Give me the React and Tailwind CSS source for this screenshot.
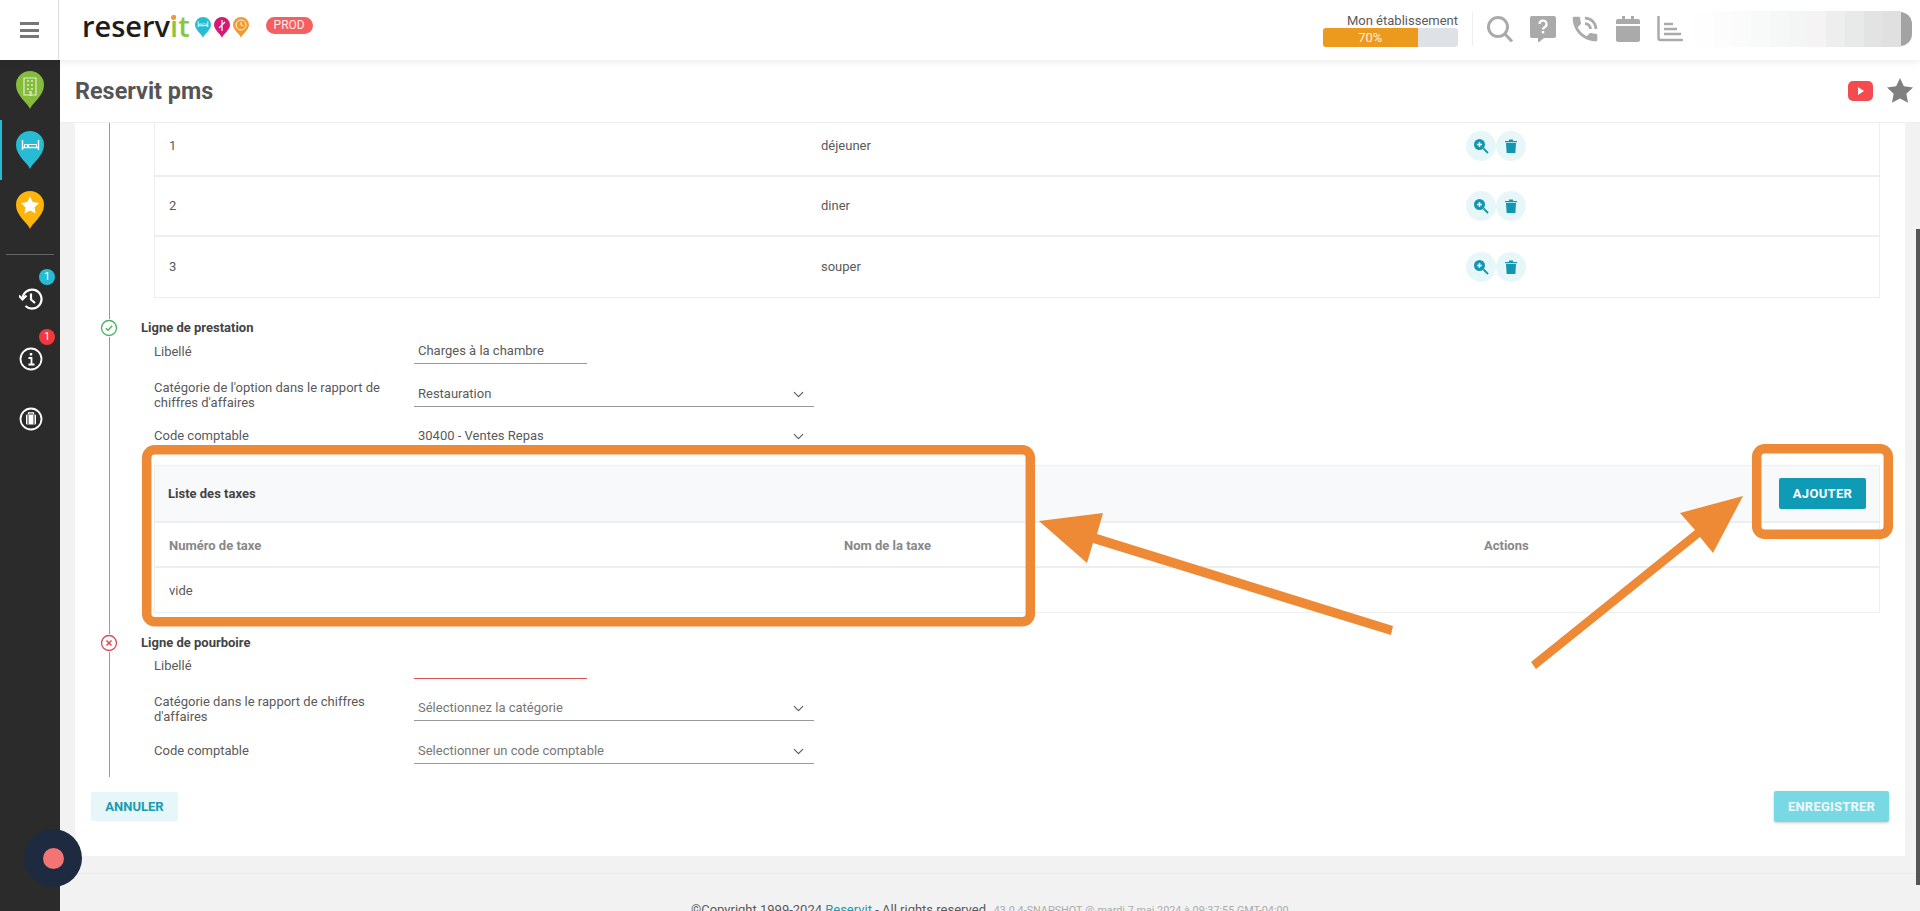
import React from 'react'
import { ChevronDown } from 'lucide-react'

const Pin = ({ color, children }) => (
  <svg width="28" height="38" viewBox="0 0 28 38">
    <path d="M14 38 C12 32 0 25 0 14 A14 14 0 0 1 28 14 C28 25 16 32 14 38 Z" fill={color} />
    {children}
  </svg>
)

const MiniPin = ({ color, children }) => (
  <svg width="16" height="21" viewBox="0 0 16 21">
    <path d="M8 21 C7 17 0 13 0 8 A8 8 0 0 1 16 8 C16 13 9 17 8 21 Z" fill={color} />
    {children}
  </svg>
)

const Bed = ({ scale = 1, x = 0, y = 0 }) => (
  <g transform={`translate(${x} ${y}) scale(${scale})`} fill="none" stroke="#fff" strokeWidth="1.4">
    <path d="M1 2v10M17 2v10M1 9.5h16" />
    <path d="M3 9V6.500h3V9M7 9V6.500h8V9" strokeWidth="1" />
  </g>
)

const GrayIcon = ({ children, vb = '0 0 26 26' }) => (
  <svg width="26" height="26" viewBox={vb}>{children}</svg>
)

const ActionButtons = () => (
  <div className="flex">
    <div className="w-[30px] h-[30px] rounded-full bg-[#e6f6f9] flex items-center justify-center">
      <svg width="16" height="16" viewBox="0 0 16 16">
        <circle cx="6.500" cy="6.500" r="5.500" fill="#1397b0" />
        <path d="M10.500 10.500 15 15" stroke="#1397b0" strokeWidth="1.800" />
        <path d="M6.500 4v5M4 6.500h5" stroke="#e6f6f9" strokeWidth="1.500" />
      </svg>
    </div>
    <div className="w-[30px] h-[30px] rounded-full bg-[#e6f6f9] flex items-center justify-center">
      <svg width="12" height="14" viewBox="0 0 12 14">
        <path d="M0 2h12v1.200H0zM4 .5h4V2H4z" fill="#1397b0" />
        <path d="M1 4h10l-.6 10H1.600z" fill="#1397b0" />
      </svg>
    </div>
  </div>
)

const OptionRow = ({ num, name, last }) => (
  <div className={`h-[60px] flex items-center text-[13px] ${last ? '' : 'border-b-2 border-[#eeeeee]'}`}>
    <div className="w-[666px] pl-[14px]">{num}</div>
    <div className="w-[645px]">{name}</div>
    <ActionButtons />
  </div>
)

// h = row height, labelClass = nudge of the label above the field's bottom line
const FormRow = ({ label, value, placeholder, select, error, h, labelClass }) => (
  <div className={`flex items-end ${h}`}>
    <div className={`w-[260px] leading-[15px] pr-2 ${labelClass}`}>{label}</div>
    {select ? (
      <div className="w-[400px] h-[28px] border-b border-[#999] flex items-center justify-between pl-1 pr-[7px] pt-[3px]">
        <span className={placeholder ? 'text-[#777]' : ''}>{value || placeholder}</span>
        <ChevronDown size={17} strokeWidth={1.5} className="text-[#555]" />
      </div>
    ) : (
      <div className={`w-[173px] h-[26px] border-b pl-1 flex items-center ${error ? 'border-[#d9534f]' : 'border-[#999]'}`}>
        {value}
      </div>
    )}
  </div>
)

const StatusIcon = ({ ok }) => (
  <svg width="18" height="18" viewBox="0 0 18 18" className="bg-white rounded-full shrink-0">
    <circle cx="9" cy="9" r="7.500" fill="none" stroke={ok ? '#4caf63' : '#dc4a55'} strokeWidth="1.300" />
    {ok ? (
      <path d="M5.800 9.200 8 11.200 12.200 6.800" fill="none" stroke="#4caf63" strokeWidth="1.400" />
    ) : (
      <path d="M6.500 6.500l5 5M11.500 6.500l-5 5" fill="none" stroke="#dc4a55" strokeWidth="1.500" />
    )}
  </svg>
)

const App = () => {
  return (
    <div className="relative w-[1920px] h-[911px] overflow-hidden bg-[#f2f2f2] font-['Roboto',sans-serif] text-[13px] text-[#5a5a5a]">
      {/* top bar */}
      <header className="relative z-10 h-[60px] bg-white flex items-center shadow-[0_2px_8px_rgba(0,0,0,0.08)]">
        <div className="w-[59px] h-full border-r border-[#ddd] flex flex-col items-center justify-center gap-[3.500px]">
          <span className="w-[19px] h-[3px] bg-[#777]" />
          <span className="w-[19px] h-[3px] bg-[#777]" />
          <span className="w-[19px] h-[3px] bg-[#777]" />
        </div>
        <div className="ml-[23px] flex items-center h-full pb-[10px]">
          <span className="font-['Open_Sans',sans-serif] font-semibold text-[29px] leading-none text-[#1d1d1b]">
            reserv
            <span className="text-[#8cc63f]">
              <span className="relative">
                i
                <span className="absolute left-[1px] top-[9px] w-[5px] h-[5px] rounded-full bg-[#ef9a33]" />
              </span>
              t
            </span>
          </span>
          <div className="flex gap-[3px] ml-[5px] mt-[5px]">
            <MiniPin color="#27bcd3"><Bed scale={0.6} x={2.600} y={3} /></MiniPin>
            <MiniPin color="#d41a73">
              <path d="M8 3v11M8 8l3-3M8 8 5 11" stroke="#fff" strokeWidth="1.200" fill="none" />
            </MiniPin>
            <MiniPin color="#ef9a33">
              <circle cx="8" cy="8" r="5" fill="none" stroke="#fff" strokeWidth="0.900" />
              <path d="M8 5v3l2.500 1" fill="none" stroke="#fff" strokeWidth="0.900" />
            </MiniPin>
          </div>
          <span className="ml-[17px] w-[47px] h-[17px] rounded-full bg-[#f55f5f] text-[#ffe9e9] text-[12px] flex items-center justify-center">PROD</span>
        </div>

        <div className="ml-auto flex items-center h-full">
          <div className="w-[135px] text-right">
            <div className="text-[13px] leading-[15px]">Mon établissement</div>
            <div className="h-[19px] rounded-[3px] bg-[#dee2e6] overflow-hidden">
              <div className="w-[70%] h-full bg-[#ec9a1e] text-[#fff3d9] text-[13px] leading-[19px] text-center">70%</div>
            </div>
          </div>
          <div className="w-px h-[34px] bg-[#eee] ml-[14px] mb-[2px]" />
          <div className="flex items-center gap-[16.5px] ml-[14px] mb-[2px]">
            <GrayIcon>
              <circle cx="11" cy="11" r="9.500" fill="none" stroke="#aaa" strokeWidth="3" />
              <path d="M17.500 17.500 25 25.500" stroke="#aaa" strokeWidth="3" />
            </GrayIcon>
            <GrayIcon>
              <path d="M2 0h22a2 2 0 0 1 2 2v18a2 2 0 0 1-2 2H14l-6 5v-5H2a2 2 0 0 1-2-2V2a2 2 0 0 1 2-2Z" fill="#aaa" />
              <path d="M9.500 8a3.500 3.500 0 1 1 5 3.200c-1 .6-1.500 1.200-1.500 2.300" fill="none" stroke="#fff" strokeWidth="2.200" />
              <rect x="11.800" y="15" width="2.400" height="2.400" fill="#fff" />
            </GrayIcon>
            <GrayIcon vb="2.500 2.500 19 19">
              <path d="M20 15.500c-1.250 0-2.450-.2-3.570-.57-.35-.11-.74-.03-1.020.24l-2.200 2.200c-2.830-1.440-5.150-3.750-6.590-6.590l2.200-2.210c.28-.26.36-.65.25-1C8.700 6.450 8.500 5.250 8.500 4c0-.55-.45-1-1-1H4c-.55 0-1 .45-1 1 0 9.390 7.610 17 17 17 .55 0 1-.45 1-1v-3.500c0-.55-.45-1-1-1zM19 12h2c0-4.970-4.030-9-9-9v2c3.870 0 7 3.130 7 7zm-4 0h2c0-2.760-2.240-5-5-5v2c1.660 0 3 1.340 3 3z" fill="#aaa" />
            </GrayIcon>
            <GrayIcon vb="-1 0 26 26">
              <path d="M2 3h4V0h3v3h6V0h3v3h4a2 2 0 0 1 2 2v3H0V5a2 2 0 0 1 2-2Z" fill="#aaa" />
              <path d="M0 10h24v14a2 2 0 0 1-2 2H2a2 2 0 0 1-2-2Z" fill="#aaa" />
            </GrayIcon>
            <GrayIcon>
              <path d="M1.500 1v21a2 2 0 0 0 2 2H25" fill="none" stroke="#aaa" strokeWidth="2.500" strokeLinecap="round" />
              <path d="M7 8h9M7 13h13M7 18h17" stroke="#aaa" strokeWidth="2.500" />
            </GrayIcon>
          </div>
          {/* pixelated user name */}
          <div className="relative w-[206px] h-[36px] ml-[12px] mr-[19px] mb-[2px]">
            <div className="absolute -right-[11px] top-[1px] w-[24px] h-[34px] rounded-full bg-[#a3a3a3]" />
            <div className="relative h-full flex">
              <span className="flex-1 bg-[#fefefe]" />
              <span className="flex-1 bg-[#fcfcfc]" />
              <span className="flex-1 bg-[#fbfbfb]" />
              <span className="flex-1 bg-[#f8f9f9]" />
              <span className="flex-1 bg-[#f6f7f7]" />
              <span className="flex-1 bg-[#f4f6f6]" />
              <span className="flex-1 bg-[#f5f3f3]" />
              <span className="flex-1 bg-[#eeeeee]" />
              <span className="flex-1 bg-[#e8eaea]" />
              <span className="flex-1 bg-[#e3e3e3]" />
              <span className="flex-1 bg-[#dfe0df]" />
            </div>
          </div>
        </div>
      </header>

      <div className="flex h-[851px]">
        {/* left rail */}
        <aside className="w-[60px] shrink-0 bg-[#2b2b2b] flex flex-col items-center pt-[11px]">
          <Pin color="#86bc3c">
            <path d="M8 7h12v17H8z" fill="none" stroke="#dceec5" strokeWidth="1.200" />
            <path d="M11 10h2M15 10h2M11 14h2M15 14h2M11 18h2M15 18h2M13 21h2v3h-2" stroke="#dceec5" strokeWidth="1.400" fill="none" />
          </Pin>
          <div className="relative w-full h-[60px] mt-[11px] flex items-start justify-center pt-[11px] border-l-2 border-[#27bcd3] pr-[2px]">
            <Pin color="#27bcd3"><Bed x={5.500} y={7} /></Pin>
          </div>
          <div className="mt-[11px]">
            <Pin color="#fdb50b">
              <path d="M14 5.500l2.800 5.600 6.200.9-4.500 4.400 1.100 6.100-5.600-2.900-5.600 2.900 1.100-6.100L5 12l6.200-.9Z" fill="#fff" />
            </Pin>
          </div>
          <div className="w-[48px] h-px bg-[#666] mt-[25px]" />
          <div className="relative mt-[32px] ml-[2px] w-[24px] h-[24px]">
            <span className="absolute -top-[18px] left-[20px] w-[16px] h-[16px] rounded-full bg-[#27bcd3] text-white text-[11px] flex items-center justify-center">1</span>
            <svg width="24" height="24" viewBox="0 0 24 24" fill="none" stroke="#fff" strokeWidth="2.200">
              <path d="M3.500 12a9.500 9.500 0 1 1 3 7" />
              <path d="M0 8.500l3.500 4 4-4" />
              <path d="M12 6.500v6l4 3.500" />
            </svg>
          </div>
          <div className="relative mt-[36px] ml-[2px] w-[24px] h-[24px]">
            <span className="absolute -top-[18px] left-[20px] w-[16px] h-[16px] rounded-full bg-[#f03a3e] text-white text-[11px] flex items-center justify-center">1</span>
            <svg width="24" height="24" viewBox="0 0 24 24" fill="none" stroke="#fff">
              <circle cx="12" cy="12" r="10.500" strokeWidth="1.800" />
              <path d="M12 6v2.500" strokeWidth="2.400" />
              <path d="M9.500 11H12.500V17M9.500 17.500h6" strokeWidth="1.800" />
            </svg>
          </div>
          <div className="mt-[36px] ml-[2px] w-[24px] h-[24px]">
            <svg width="24" height="24" viewBox="0 0 24 24" fill="none" stroke="#fff">
              <circle cx="12" cy="12" r="10.500" strokeWidth="1.800" />
              <rect x="7" y="7.500" width="10" height="10" rx="1" fill="#fff" stroke="none" />
              <path d="M9.500 7.500V5.800h5v1.700" strokeWidth="1.200" />
              <path d="M9 7.500v10M15 7.500v10" stroke="#2b2b2b" strokeWidth="1" />
            </svg>
          </div>
        </aside>

        <main className="flex-1 min-w-0 flex flex-col">
          {/* title bar */}
          <div className="h-[63px] shrink-0 bg-white border-b border-[#eee] flex items-center pl-[15px] pr-[7px]">
            <h1 className="text-[23.4px] font-bold text-[#555] leading-none pt-[2px]">Reservit pms</h1>
            <div className="ml-auto flex items-center gap-[14px]">
              <div className="w-[25px] h-[20px] rounded-[5px] bg-[#f44b4f] flex items-center justify-center">
                <span className="w-0 h-0 border-y-[4px] border-y-transparent border-l-[6px] border-l-white" />
              </div>
              <svg width="26" height="25" viewBox="0 0 24 23" className="mb-[2px]">
                <path d="M12 0l3.600 7.600 8.400 1.100-6.100 5.800 1.500 8.300L12 18.800l-7.400 4 1.500-8.300L0 8.700l8.400-1.100Z" fill="#808080" />
              </svg>
            </div>
          </div>

          {/* scrolling content */}
          <div className="relative flex-1 min-h-0 overflow-hidden">
            <div className="absolute right-0 top-[106px] w-[4px] h-[656px] bg-[#555]" />
            <div className="ml-[15px] mr-[15px] h-[733px] bg-white pl-[16px] pr-[25px]">
              <div className="flex">
                <div className="w-px h-[654px] bg-[#999] ml-[18px] shrink-0" />
                <div className="flex-1 min-w-0 h-[654px]">
                  {/* rows of the previous section, scrolled partly out of view */}
                  <div className="ml-[44px] -mt-[6px] border border-t-0 border-[#eeeeee]">
                    <OptionRow num="1" name="déjeuner" />
                    <OptionRow num="2" name="diner" />
                    <OptionRow num="3" name="souper" last />
                  </div>

                  <div className="flex items-center h-[18px] mt-[21px] -ml-[10px]">
                    <StatusIcon ok />
                    <span className="ml-[23px] font-bold text-[#444]">Ligne de prestation</span>
                  </div>
                  <div className="ml-[44px] mt-[1px]">
                    <FormRow label="Libellé" value="Charges à la chambre" h="h-[26px]" labelClass="mb-[5px]" />
                    <FormRow label="Catégorie de l'option dans le rapport de chiffres d'affaires" value="Restauration" select h="h-[43px]" labelClass="-mb-[2.5px]" />
                    <FormRow label="Code comptable" value="30400 - Ventes Repas" select h="h-[42px]" labelClass="mb-[6px]" />

                    <div className="mt-[16px] border border-[#eeeeee]">
                      <div className="h-[57px] bg-[#f8f9fa] border-b-2 border-[#eeeeee] flex items-center justify-between pl-[13px] pr-[13px]">
                        <span className="font-bold text-[#444]">Liste des taxes</span>
                        <button className="w-[87px] h-[31px] rounded-[2px] bg-[#0f9ab5] text-white font-bold tracking-[0.3px]">AJOUTER</button>
                      </div>
                      <div className="h-[45px] pt-[2px] border-b-2 border-[#eeeeee] flex items-center font-bold text-[#888]">
                        <div className="w-[689px] pl-[14px]">Numéro de taxe</div>
                        <div className="w-[640px]">Nom de la taxe</div>
                        <div>Actions</div>
                      </div>
                      <div className="h-[44px] pt-[1px] flex items-center pl-[14px]">vide</div>
                    </div>
                  </div>

                  <div className="flex items-center h-[18px] mt-[21px] -ml-[10px]">
                    <StatusIcon />
                    <span className="ml-[23px] font-bold text-[#444]">Ligne de pourboire</span>
                  </div>
                  <div className="ml-[44px] mt-[1px]">
                    <FormRow label="Libellé" error h="h-[26px]" labelClass="mb-[6px]" />
                    <FormRow label="Catégorie dans le rapport de chiffres d'affaires" placeholder="Sélectionnez la catégorie" select h="h-[42px]" labelClass="-mb-[2.5px]" />
                    <FormRow label="Code comptable" placeholder="Selectionner un code comptable" select h="h-[43px]" labelClass="mb-[6px]" />
                  </div>
                </div>
              </div>
              <div className="flex justify-between items-start mt-[15px]">
                <button className="w-[87px] h-[29px] rounded-[2px] bg-[#e6f6f9] text-[#1a9bb0] font-bold">ANNULER</button>
                <button className="w-[115px] h-[31px] -mt-[1px] -mr-[9px] rounded-[2px] bg-[#78d8e4] text-[#effbfd] font-bold tracking-[0.2px] shadow-[0_1px_3px_rgba(0,0,0,0.2)]">ENREGISTRER</button>
              </div>
            </div>
            <div className="mt-[17px] border-t border-[#ebebeb] pt-[26px] pl-[631px] whitespace-nowrap">
              <span>©Copyright 1999-2024 </span>
              <span className="text-[#1a9bb0]">Reservit</span>
              <span> - All rights reserved. </span>
              <span className="text-[10.8px] text-[#aaa] ml-[1px]">43.0.4-SNAPSHOT @ mardi 7 mai 2024 à 09:37:55 GMT-04:00</span>
            </div>
          </div>
        </main>
      </div>

      {/* recording button */}
      <div className="absolute z-20 left-[24px] top-[829px] w-[58px] h-[58px] rounded-full bg-[#1e2a3f] flex items-center justify-center">
        <span className="w-[21px] h-[21px] rounded-full bg-[#f47474]" />
      </div>

      {/* annotation drawn over the screenshot */}
      <svg className="absolute z-30 left-0 top-0 pointer-events-none" width="1920" height="911" viewBox="0 0 1920 911">
        <rect x="146.700" y="449.700" width="883.600" height="172" rx="8" fill="none" stroke="#ee8a36" strokeWidth="9.500" />
        <rect x="1756.700" y="448.700" width="131.600" height="85.600" rx="8" fill="none" stroke="#ee8a36" strokeWidth="9.500" />
        <path d="M1039 521 1103 513 1097 534 1393 626 1391 635 1093 543 1087 563Z" fill="#ee8a36" />
        <path d="M1743 496 1680 513 1695 530 1531 662 1536 669 1700 537 1713 553Z" fill="#ee8a36" />
      </svg>
    </div>
  )
}

export default App
